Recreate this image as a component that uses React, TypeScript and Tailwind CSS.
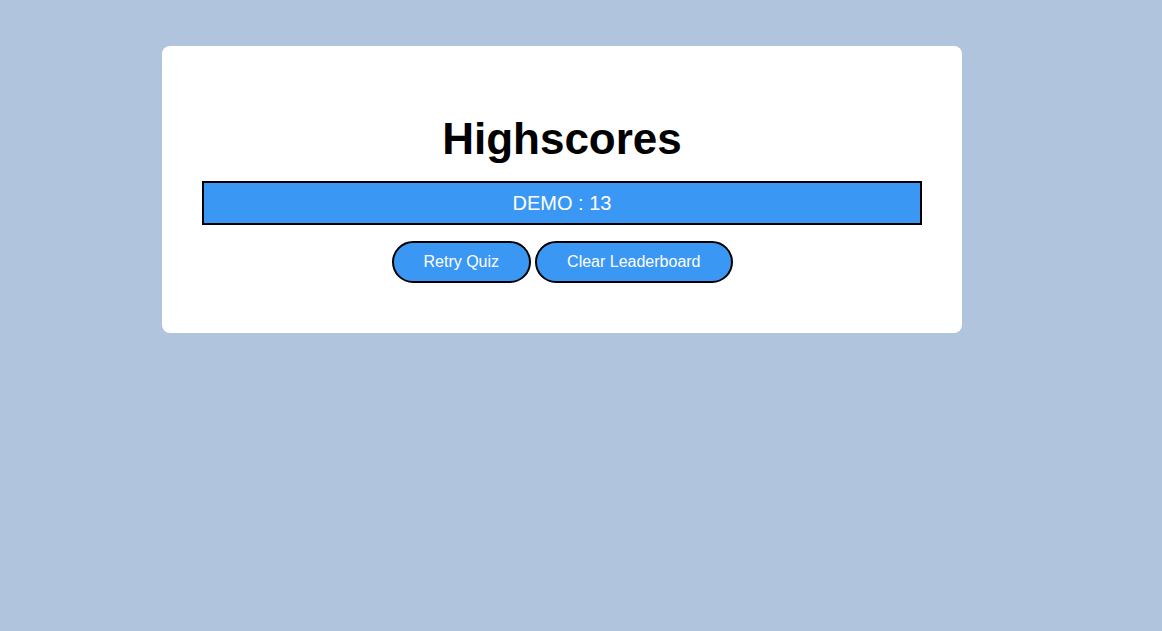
export default function App() {
  const scores = [{ initials: "DEMO", score: 13 }];

  return (
    <div className="min-h-screen w-full bg-[#b0c4de] pt-[46px] font-['Liberation_Sans',Arial,sans-serif]">
      <div className="ml-[162px] w-[800px] rounded-lg bg-white px-[40px] pt-[67px] pb-[50px]">
        <h1 className="text-center text-[44px] font-bold leading-[51px] text-black">
          Highscores
        </h1>

        <ul className="mt-[17px]">
          {scores.map((s) => (
            <li
              key={s.initials}
              className="flex h-[44px] items-center justify-center border-2 border-black bg-[#3b97f4] text-[20px] text-white"
            >
              {s.initials} : {s.score}
            </li>
          ))}
        </ul>

        <div className="mt-[16px] flex justify-center gap-[4px]">
          <button className="h-[42px] rounded-full border-2 border-black bg-[#3b97f4] px-[30px] text-[16px] text-white">
            Retry Quiz
          </button>
          <button className="h-[42px] rounded-full border-2 border-black bg-[#3b97f4] px-[30px] text-[16px] text-white">
            Clear Leaderboard
          </button>
        </div>
      </div>
    </div>
  );
}
